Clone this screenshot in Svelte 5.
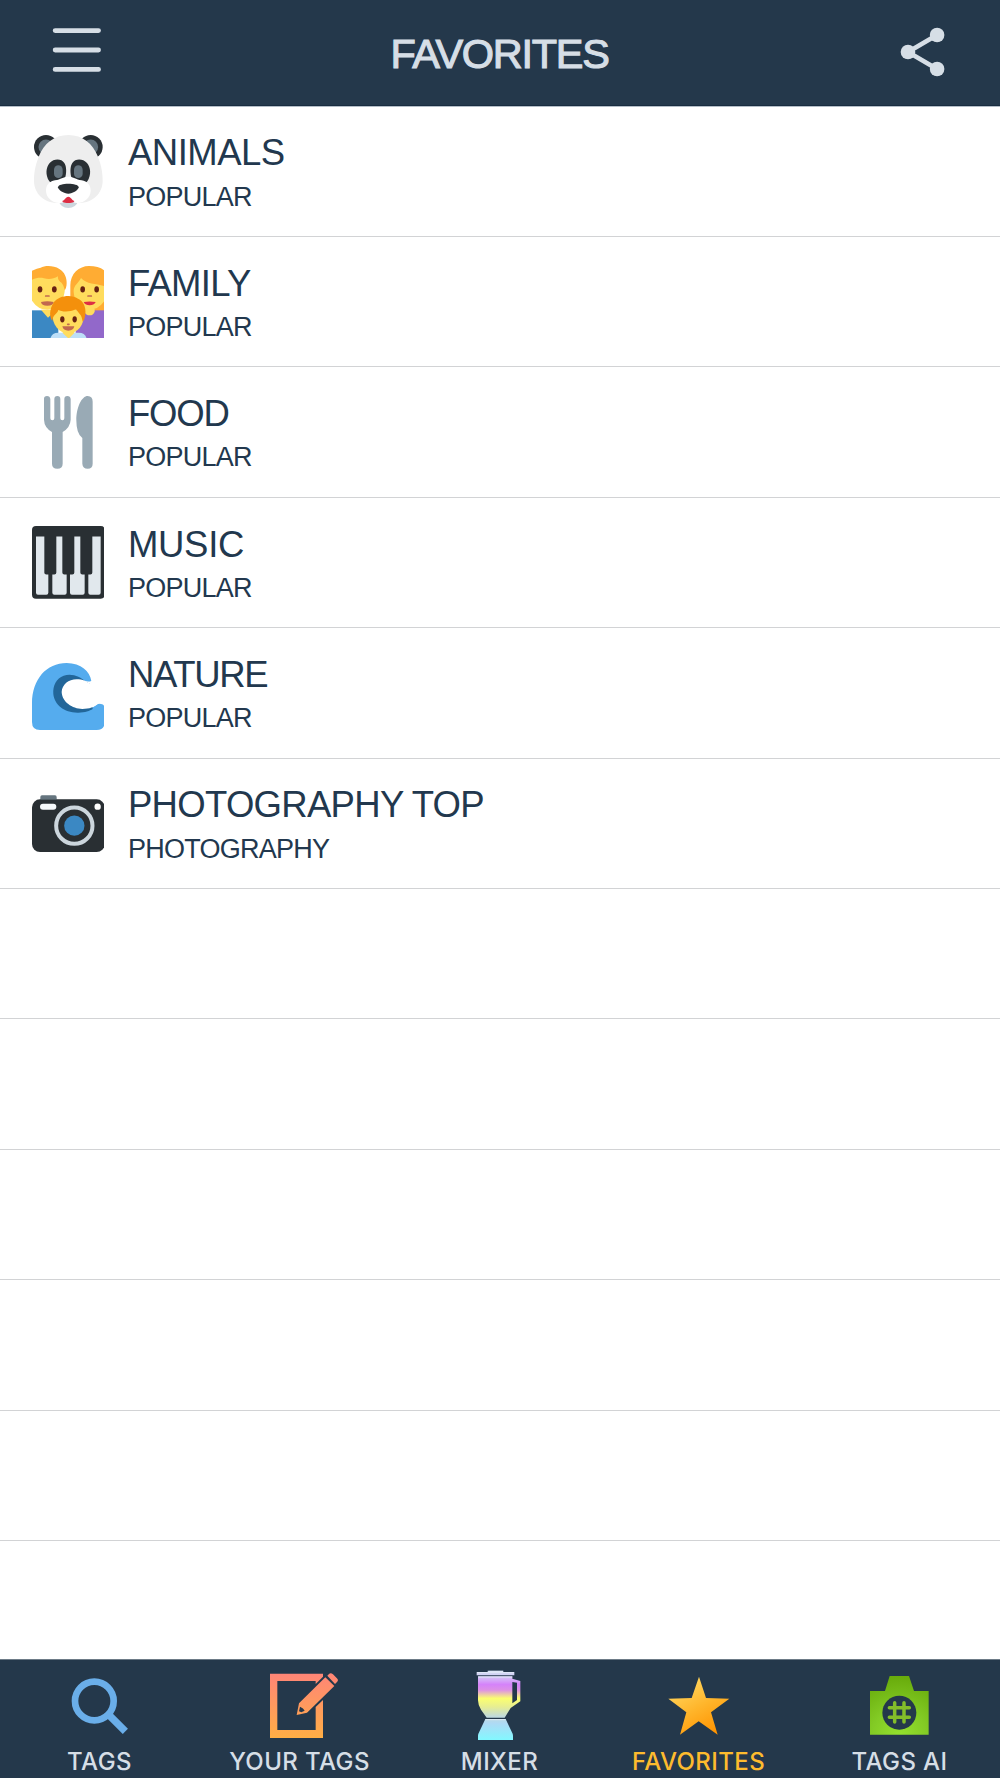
<script>
  // "tracking" is the letter spacing of each title, in pixels
  const favorites = [
    { icon: 'panda', title: 'ANIMALS', group: 'POPULAR', tracking: -0.5 },
    { icon: 'family', title: 'FAMILY', group: 'POPULAR', tracking: -0.75 },
    { icon: 'food', title: 'FOOD', group: 'POPULAR', tracking: -1.2 },
    { icon: 'piano', title: 'MUSIC', group: 'POPULAR', tracking: -0.3 },
    { icon: 'wave', title: 'NATURE', group: 'POPULAR', tracking: -1.35 },
    { icon: 'camera', title: 'PHOTOGRAPHY TOP', group: 'PHOTOGRAPHY', tracking: -0.7 },
  ];
  const emptyRows = [0, 1, 2, 3, 4];
  const tabs = [
    { icon: 'search', label: 'TAGS' },
    { icon: 'edit', label: 'YOUR TAGS' },
    { icon: 'mixer', label: 'MIXER' },
    { icon: 'star', label: 'FAVORITES', active: true },
    { icon: 'ai', label: 'TAGS AI' },
  ];
</script>

<div class="screen">
  <header>
    <button class="menu" aria-label="Menu">
      <svg width="50" height="46" viewBox="0 0 50 46">
        <path d="M3.2 4.6h43.3M3.2 24h43.3M3.2 43.4h43.3" stroke="#d6dee6" stroke-width="4.9" stroke-linecap="round" />
      </svg>
    </button>
    <h1>FAVORITES</h1>
    <button class="share" aria-label="Share">
      <svg width="46" height="50" viewBox="0 0 46 50">
        <path d="M37 8L8 25L37 42" fill="none" stroke="#d6dee6" stroke-width="4.6" />
        <circle cx="37.1" cy="8" r="7.3" fill="#d6dee6" />
        <circle cx="8" cy="25" r="7.3" fill="#d6dee6" />
        <circle cx="37.1" cy="42" r="7.3" fill="#d6dee6" />
      </svg>
    </button>
  </header>

  <main>
    {#each favorites as item}
      <div class="row">
        <div class="emoji">
          {#if item.icon === 'panda'}
            <svg viewBox="34 45 218 218">
              <circle cx="76" cy="81" r="36" fill="#292f33" />
              <circle cx="210" cy="81" r="36" fill="#292f33" />
              <circle cx="76" cy="81" r="22.5" fill="#66757f" />
              <circle cx="210" cy="81" r="22.5" fill="#66757f" />
              <path d="M113 240Q120 264 143 264T174 240Z" fill="#ccd6dd" />
              <path d="M143 45C186 45 217 72 231 108C239 129 246 150 246 182C246 217 219 249 174 249C158 249 150 240 143 236C136 240 128 249 112 249C67 249 40 217 40 182C40 150 47 129 55 108C69 72 100 45 143 45Z" fill="#eee" />
              <path d="M86 184C73 165 76 141 87 129C100 115 122 115 131 129C138 139 138 160 133 174L91 188ZM200 184C213 165 210 141 199 129C186 115 164 115 155 129C148 139 148 160 153 174L195 188Z" fill="#292f33" />
              <rect x="100" y="136" width="26" height="38" rx="13" fill="#66757f" />
              <rect x="160" y="136" width="26" height="38" rx="13" fill="#66757f" />
              <path d="M143 170C160 170 164 178 183 181C200 184 210 195 210 212C210 233 190 249 170 249C157 249 149 241 143 235C137 241 129 249 116 249C96 249 76 233 76 212C76 195 86 184 103 181C122 178 126 170 143 170Z" fill="#fff" />
              <path d="M126 242C132 241 136 230 143 230S154 241 160 242C163 244 158 249 143 249S123 244 126 242Z" fill="#dd2e44" />
              <path d="M112 202C112 188 174 188 174 202C174 210 156 221 143 221S112 210 112 202Z" fill="#292f33" />
            </svg>
          {:else if item.icon === 'family'}
            <svg viewBox="34 47 218 218">
              <path d="M34 180H113V265H34Z" fill="#3b88c3" />
              <path d="M149 240V105C149 70 175 47 205 47Q235 47 252 61V205H149Z" fill="#ffac33" />
              <path d="M165 180H252V265H165Z" fill="#9268ca" />
              <path d="M61 178H100V185L82 202Z" fill="#ffdc5d" />
              <path d="M190 175H222V184Q218 195 207 195T190 184Z" fill="#ffdc5d" />
              <path d="M34 83C45 76 54 80 65 77H120C126 84 133 92 133 110C133 148 112 178 80 178Q52 178 34 151Z" fill="#ffdc5d" />
              <path d="M34 88V61Q50 53 60 52C73 45 99 45 116 56C132 65 138 82 138 98C138 109 135 117 132 119C130 111 127 99 119 95C113 90 111 84 112 78C98 87 83 88 70 84C57 81 48 83 34 88Z" fill="#ffac33" />
              <path d="M159 124C158 104 174 99 181 83C198 103 227 99 252 108V151Q234 178 207 178C178 178 160 151 159 124Z" fill="#ffdc5d" />
              <g fill="#662113">
                <ellipse cx="58" cy="117" rx="7" ry="9.5" />
                <ellipse cx="101" cy="117" rx="7" ry="9.5" />
                <ellipse cx="186" cy="117" rx="7" ry="9.5" />
                <ellipse cx="228" cy="117" rx="7" ry="9.5" />
              </g>
              <path d="M75 137H85M202 137H212" stroke="#c1694f" stroke-width="5" stroke-linecap="round" />
              <path d="M61 155Q80 150 99 155Q98 166 80 166T61 155Z" fill="#c1694f" />
              <path d="M189 155Q207 152 225 155Q220 165 207 165T189 155Z" fill="#dd2e44" />
              <path d="M89 265Q93 247 113 247H174Q194 247 198 265Z" fill="#bddff8" />
              <path d="M126 241H161V248L144 265L126 248Z" fill="#ffdc5d" />
              <path d="M96 187Q142 160 189 190C192 224 171 248 143 248S93 224 96 187Z" fill="#ffdc5d" />
              <path d="M95 211C87 204 84 178 100 155C115 135 153 131 172 145C188 151 201 174 191 207L186 214C184 204 182 195 177 191C172 185 169 180 166 176C146 187 123 184 113 179C111 191 98 190 95 211Z" fill="#f4900c" />
              <ellipse cx="125" cy="207" rx="6.5" ry="9.5" fill="#662113" />
              <ellipse cx="162" cy="207" rx="6.5" ry="9.5" fill="#662113" />
              <path d="M141 222H145" stroke="#c1694f" stroke-width="5" stroke-linecap="round" />
              <path d="M125 228H161Q158 241 143 241T125 228Z" fill="#c1694f" />
            </svg>
          {:else if item.icon === 'food'}
            <svg viewBox="34 48 218 218">
              <path d="M70 56Q70 48 79 48T89 57V115Q89 121 95 121T101 115V57Q101 48 110 48T119 57V115Q119 121 125 121T131 115V57Q131 48 140 48T150 57V119Q149 142 126 156V251Q126 266 110 266T94 251V156Q71 143 70 119Z" fill="#99aab5" />
              <path d="M216 65V251Q216 266 201 266T185 251V174Q167 162 167 121C167 80 184 48 201 48Q216 49 216 65Z" fill="#99aab5" />
            </svg>
          {:else if item.icon === 'piano'}
            <svg viewBox="34 48.5 218 218">
              <rect x="34" y="48.5" width="218" height="218" rx="12" fill="#292f33" />
              <g fill="#e1e8ed">
                <path d="M46 80H71V189Q71 194 77 194H83V249Q83 255 77 255H52Q46 255 46 249Z" />
                <path d="M107 80H125V188Q125 194 131 194H138V249Q138 255 132 255H101Q95 255 95 249V194H101Q107 194 107 188Z" />
                <path d="M161 80H179V188Q179 194 185 194H192V249Q192 255 186 255H154Q148 255 148 249V194H155Q161 194 161 188Z" />
                <path d="M215 80H240V249Q240 255 234 255H209Q203 255 203 249V194H209Q215 194 215 188Z" />
              </g>
            </svg>
          {:else if item.icon === 'wave'}
            <svg viewBox="34 50 218 218">
              <path d="M212 121C204 129 184 118 164 113C132 110 111 132 113 161C116 190 144 214 179 212C207 211 218 199 230 192C239 188 252 193 252 202V245Q252 269 228 269H58Q34 269 34 245V188C35 117 77 68 138 68C182 68 207 94 212 121Z" fill="#55acee" />
              <path d="M213 127C211 131 205 130 195 124C179 108 153 98 129 106C107 114 96 136 98 161C101 193 131 218 173 217C194 216 207 212 216 206Z" fill="#226699" />
              <path d="M207 129C199 127 193 118 174 117C147 114 124 131 123 155C124 185 155 205 185 206C207 206 221 200 230 192L248 184V121L213 122Q213 129 207 129Z" fill="#fff" />
            </svg>
          {:else}
            <svg viewBox="34 21 218 218">
              <rect x="59" y="46" width="49" height="25" rx="5" fill="#66757f" />
              <rect x="34" y="58" width="218" height="158" rx="24" fill="#292f33" />
              <path d="M59 58H108" stroke="#66757f" stroke-width="2" />
              <circle cx="161" cy="137" r="54.5" fill="none" stroke="#ccd6dd" stroke-width="12" />
              <circle cx="161" cy="137" r="30.5" fill="#3b88c3" />
              <rect x="58" y="71" width="49" height="18" rx="9" fill="#f5f8fa" />
              <circle cx="231" cy="80" r="9.5" fill="#fff" />
            </svg>
          {/if}
        </div>
        <div class="text">
          <div class="title" style:letter-spacing="{item.tracking}px">{item.title}</div>
          <div class="group">{item.group}</div>
        </div>
      </div>
    {/each}
    {#each emptyRows as _}
      <div class="row"></div>
    {/each}
  </main>

  <nav>
    {#each tabs as tab}
      <button class="tab" class:active={tab.active}>
        {#if tab.icon === 'search'}
          <svg viewBox="165 30 270 270">
            <circle cx="283" cy="153" r="58" fill="none" stroke="#6aaee9" stroke-width="20" />
            <path d="M328 196L376 244" stroke="#6aaee9" stroke-width="22" />
          </svg>
        {:else if tab.icon === 'edit'}
          <svg viewBox="765 30 270 270">
            <defs>
              <linearGradient id="pad" gradientUnits="userSpaceOnUse" x1="0" y1="70" x2="0" y2="264">
                <stop offset="0" stop-color="#ff8577" />
                <stop offset="1" stop-color="#ffae45" />
              </linearGradient>
            </defs>
            <g fill="url(#pad)">
              <path d="M810 71H969V80L947 102V93H832V240H947V171L969 150V264H810Z" />
              <path fill-rule="evenodd" d="M976 82L1003 108L921 188L890 195L897 160ZM900 170L897 184L904 187L914 182Q911 175 900 170Z" />
              <path d="M982 77L987 72Q992 67 999 73L1010 84Q1017 90 1011 96L1005 102Z" />
            </g>
          </svg>
        {:else if tab.icon === 'mixer'}
          <svg viewBox="225 30 270 270">
            <defs>
              <linearGradient id="jug" gradientUnits="userSpaceOnUse" x1="0" y1="62" x2="0" y2="270">
                <stop offset="0" stop-color="#c8d6ef" />
                <stop offset=".07" stop-color="#d5d2f6" />
                <stop offset=".2" stop-color="#d582fa" />
                <stop offset=".28" stop-color="#dd91e5" />
                <stop offset=".4" stop-color="#fbff70" />
                <stop offset=".52" stop-color="#e7ee91" />
                <stop offset=".66" stop-color="#c1dadb" />
                <stop offset=".76" stop-color="#aedaf5" />
                <stop offset="1" stop-color="#82f8ff" />
              </linearGradient>
            </defs>
            <g fill="url(#jug)">
              <path d="M323 62H370V66H403V76H290V66H323Z" />
              <path fill-rule="evenodd" d="M294 79H397V86L421 93V154L392 174L374 203H320L303 179Q294 165 294 151ZM397 96V160L411 150V98Z" />
              <path d="M316 207H377L394 243Q399 252 399 257V270H294V257Q294 252 299 243Z" />
            </g>
            <path d="M325 64H369M291 68H402M295 81H397M316 209H377" stroke="#e6eef9" stroke-width="2.5" />
          </svg>
        {:else if tab.icon === 'star'}
          <svg viewBox="105 30 270 270">
            <defs>
              <linearGradient id="gold" gradientUnits="userSpaceOnUse" x1="190" y1="100" x2="275" y2="255">
                <stop offset="0" stop-color="#ffd45c" />
                <stop offset=".48" stop-color="#ffb52b" />
                <stop offset="1" stop-color="#ff9300" />
              </linearGradient>
            </defs>
            <path d="M237 80L258 144L328 146L273 187L293 254L236 214L180 254L199 187L145 146L215 144Z" fill="url(#gold)" />
          </svg>
        {:else}
          <svg viewBox="705 30 270 270">
            <defs>
              <radialGradient id="lime" gradientUnits="userSpaceOnUse" cx="838" cy="260" r="185">
                <stop offset="0" stop-color="#94e22e" />
                <stop offset=".45" stop-color="#83cb25" />
                <stop offset="1" stop-color="#67aa0a" />
              </radialGradient>
            </defs>
            <path d="M809 78H867L882 123H926V254H750V123H795Z" fill="url(#lime)" />
            <circle cx="838" cy="188" r="51" fill="#24384b" />
            <path d="M824 158V216M852 158V216M808 173H868M808 202H868" stroke="#83bd2a" stroke-width="10.5" stroke-linecap="round" />
          </svg>
        {/if}
        <span>{tab.label}</span>
      </button>
    {/each}
  </nav>
</div>

<style>
  :global(body) {
    margin: 0;
    background: #fff;
  }
  .screen {
    display: flex;
    flex-direction: column;
    width: 1000px;
    height: 1778px;
    overflow: hidden;
    background: #fff;
    color: #22384e;
    font-family: 'Liberation Sans', Arial, sans-serif;
  }
  button {
    margin: 0;
    padding: 0;
    border: 0;
    background: none;
    color: inherit;
    font: inherit;
  }
  svg {
    display: block;
  }
  header {
    box-sizing: border-box;
    display: grid;
    grid-template-columns: 150px 1fr 150px;
    flex: none;
    height: 106px;
    padding-top: 26px;
    border-bottom: 1px solid #182c40;
    background: #24384b;
    color: #d6dee6;
    box-shadow: 0 1px 0 #b4bec8;
  }
  .menu {
    justify-self: start;
    align-self: start;
    margin-left: 52.4px;
  }
  .share {
    justify-self: end;
    align-self: start;
    margin: 1.4px 54px 0 0;
  }
  h1 {
    margin: 4px 1px 0 0;
    font-size: 41.5px;
    font-weight: 400;
    line-height: 48px;
    letter-spacing: -1.3px;
    text-align: center;
    -webkit-text-stroke: 1.1px #d6dee6;
  }
  main {
    flex: 1;
    min-height: 0;
    padding-top: 0.6px;
    overflow: hidden;
  }
  .row {
    box-sizing: border-box;
    display: flex;
    height: 130.4px;
    padding: 28.7px 0 0 31.5px;
    border-bottom: 1px solid #d2d3d5;
  }
  .emoji {
    width: 72.67px;
    height: 72.67px;
    margin-right: 23.8px;
  }
  .title {
    margin-top: -2.8px;
    font-size: 36.5px;
    line-height: 42px;
    white-space: nowrap;
  }
  .group {
    margin-top: 6.2px;
    font-size: 27px;
    line-height: 32px;
    letter-spacing: -0.75px;
    white-space: nowrap;
  }
  nav {
    box-sizing: border-box;
    display: grid;
    grid-template-columns: repeat(5, 1fr);
    flex: none;
    height: 119px;
    border-top: 1px solid #6d7b87;
    background: #24384b;
  }
  .tab {
    display: flex;
    flex-direction: column;
    align-items: center;
    color: #d6dee6;
  }
  .tab svg {
    width: 90px;
    height: 90px;
  }
  .tab span {
    margin: -3px 1px 0 0;
    font-family: Inter, sans-serif;
    font-size: 24px;
    font-weight: 450;
    line-height: 30px;
    letter-spacing: 0.4px;
    white-space: nowrap;
  }
  .tab.active {
    color: #fdbb2e;
  }
  .tab.active span {
    margin-right: 3px;
  }
</style>
